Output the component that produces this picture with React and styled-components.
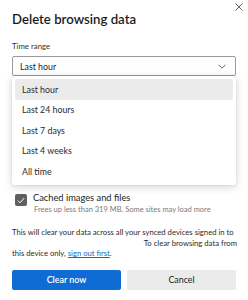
import React from 'react';
import styled, { createGlobalStyle } from 'styled-components';

// Page-wide reset
const GlobalStyle = createGlobalStyle`
  body {
    margin: 0;
    background: #fff;
    font-family: Lato, "Noto Sans", sans-serif;
    color: #1b1b1b;
  }
`;

const Dialog = styled.div`
  width: 248px;
  height: 300px;
  box-sizing: border-box;
  padding: 0 12px;
  overflow: hidden;
`;

const Header = styled.div`
  display: flex;
  justify-content: space-between;
  align-items: flex-start;
`;

const Title = styled.h1`
  margin: 10px 0 0;
  font-size: 13.2px;
  line-height: 18px;
  font-weight: 600;
`;

const CloseButton = styled.button`
  margin: 3px -7px 0 0;
  padding: 0;
  width: 8px;
  height: 8px;
  border: 0;
  background: none;
  display: flex;
  cursor: pointer;
`;

const Label = styled.div`
  margin-top: 12px;
  font-size: 7.8px;
  line-height: 12px;
  color: #333;
`;

const SelectWrap = styled.div`
  position: relative;
  margin-top: 4px;
  z-index: 2;
`;

const SelectBox = styled.div`
  height: 20px;
  box-sizing: border-box;
  border: 1px solid #9a9a9a;
  border-radius: 2px;
  display: flex;
  align-items: center;
  justify-content: space-between;
  padding: 0 9px 0 7px;
  font-size: 8.8px;
  color: #222;
`;

const Menu = styled.ul`
  position: absolute;
  top: 100%;
  left: 0;
  right: 0;
  margin: 0;
  padding: 3px;
  list-style: none;
  background: #fff;
  border-radius: 3px;
  box-shadow: 0 2px 8px rgba(0, 0, 0, 0.18), 0 0 2px rgba(0, 0, 0, 0.08);
`;

const MenuItem = styled.li`
  height: 20.5px;
  display: flex;
  align-items: center;
  padding-left: 7px;
  font-size: 8.8px;
  color: #2a2a2a;
  border-radius: 2px;
  background: ${p => (p.$active ? '#ebebeb' : 'transparent')};
`;

const Options = styled.div`
  margin-top: 116px;
  display: flex;
  flex-direction: column;
  gap: 10px;
`;

const OptionRow = styled.label`
  display: grid;
  grid-template-columns: 12px 1fr;
  column-gap: 6px;
  padding-left: 3px;
`;

const Check = styled.span`
  grid-row: 1 / span 2;
  width: 12px;
  height: 12px;
  margin-top: 2px;
  border-radius: 2px;
  background: ${p => (p.$checked ? '#5f5f5f' : '#fff')};
  border: ${p => (p.$checked ? '0' : '1px solid #666')};
  box-sizing: border-box;
  display: flex;
  align-items: center;
  justify-content: center;
`;

const OptionTitle = styled.span`
  font-size: 9.3px;
  line-height: 12px;
  color: #1b1b1b;
`;

const OptionHint = styled.span`
  font-size: 7.5px;
  line-height: 12px;
  color: #7a7a7a;
  padding-left: 1px;
  white-space: nowrap;
`;

const Notice = styled.p`
  margin: 11px 0 0;
  font-size: 7.7px;
  line-height: 10.5px;
  color: #2b2b2b;
  white-space: nowrap;
`;

const Email = styled.span`
  display: inline-block;
  width: 130px;
`;

const SignOut = styled.a`
  color: #0f6cbd;
  text-decoration: underline;
`;

const Actions = styled.div`
  margin-top: 11px;
  display: grid;
  grid-template-columns: 1fr 1fr;
  gap: 6px;
`;

const Button = styled.button`
  height: 20px;
  border: 0;
  border-radius: 2px;
  font-family: inherit;
  font-size: 8.9px;
  font-weight: ${p => (p.$primary ? 600 : 400)};
  background: ${p => (p.$primary ? '#0f6cd4' : '#ebebeb')};
  color: ${p => (p.$primary ? '#fff' : '#222')};
  cursor: pointer;
`;

const ranges = ['Last hour', 'Last 24 hours', 'Last 7 days', 'Last 4 weeks', 'All time'];

const options = [
  { title: 'Cached images and files', hint: 'Frees up less than 319 MB. Some sites may load more', checked: true },
];

export default function App() {
  return (
    <>
      <GlobalStyle />
      <Dialog>
        <Header>
          <Title>Delete browsing data</Title>
          <CloseButton aria-label="Close">
            <svg width="8" height="8" viewBox="0 0 8 8">
              <path d="M0.5 0.5 L7.5 7.5 M7.5 0.5 L0.5 7.5" stroke="#555" strokeWidth="0.9" />
            </svg>
          </CloseButton>
        </Header>

        <Label>Time range</Label>
        <SelectWrap>
          <SelectBox>
            <span>Last hour</span>
            <svg width="8" height="5" viewBox="0 0 8 5">
              <path d="M0.5 0.7 L4 4.2 L7.5 0.7" fill="none" stroke="#555" strokeWidth="0.9" />
            </svg>
          </SelectBox>
          <Menu>
            {ranges.map((r, i) => (
              <MenuItem key={r} $active={i === 0}>{r}</MenuItem>
            ))}
          </Menu>
        </SelectWrap>

        <Options>
          {options.map(o => (
            <OptionRow key={o.title}>
              <Check $checked={o.checked}>
                {o.checked && (
                  <svg width="8" height="7" viewBox="0 0 8 7">
                    <path d="M0.8 3.6 L3 5.8 L7.2 1" fill="none" stroke="#fff" strokeWidth="1" />
                  </svg>
                )}
              </Check>
              <OptionTitle>{o.title}</OptionTitle>
              <OptionHint>{o.hint}</OptionHint>
            </OptionRow>
          ))}
        </Options>

        <Notice>
          This will clear your data across all your synced devices signed in to
          <br />
          <Email /> To clear browsing data from
          <br />
          this device only, <SignOut href="#">sign out first</SignOut>.
        </Notice>

        <Actions>
          <Button $primary>Clear now</Button>
          <Button>Cancel</Button>
        </Actions>
      </Dialog>
    </>
  );
}
